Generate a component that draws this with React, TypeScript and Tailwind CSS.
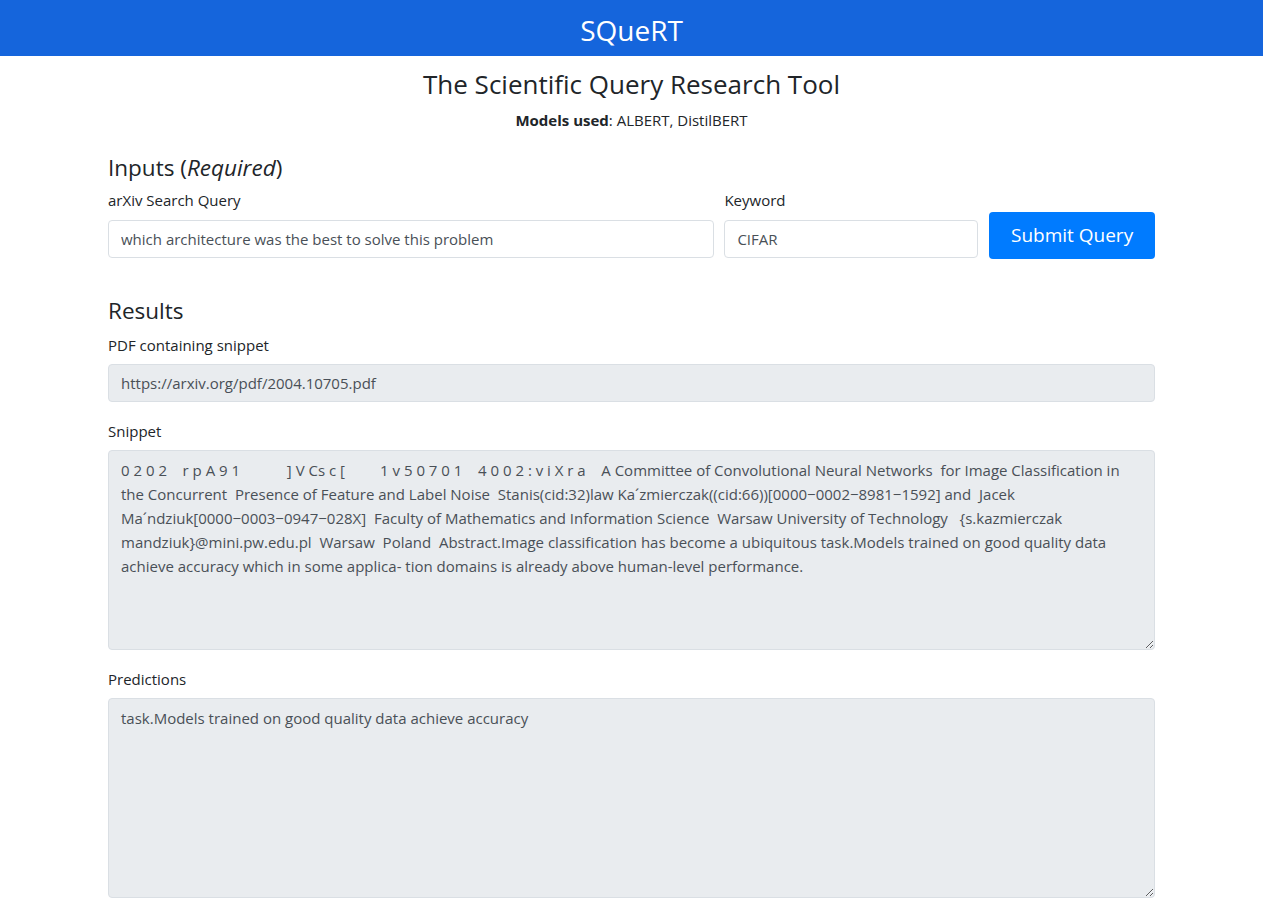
import React from 'react';

const snippet = [
  '0 2 0 2    r p A 9 1            ] V Cs c [         1 v 5 0 7 0 1    4 0 0 2 : v i X r a    A Committee of Convolutional Neural Networks  for Image Classification in',
  'the Concurrent  Presence of Feature and Label Noise  Stanis(cid:32)law Ka´zmierczak((cid:66))[0000−0002−8981−1592] and  Jacek',
  'Ma´ndziuk[0000−0003−0947−028X]  Faculty of Mathematics and Information Science  Warsaw University of Technology   {s.kazmierczak',
  'mandziuk}@mini.pw.edu.pl  Warsaw  Poland  Abstract.Image classification has become a ubiquitous task.Models trained on good quality data',
  'achieve accuracy which in some applica- tion domains is already above human-level performance.',
].join('\n');

const font = { fontFamily: '"Open Sans", "Noto Sans", sans-serif' };

function Field({ label, value, area }: { label: string; value: string; area?: boolean }) {
  return (
    <div className="mb-[17px]">
      <label className="block mb-[7px] text-[15px] leading-6 text-[#212529]">{label}</label>
      {area ? (
        <textarea
          readOnly
          value={value}
          className="block w-full h-[200px] rounded border border-[#dadfe4] bg-[#e9ecef] px-3 pt-[7px] pb-1.5 text-[15px] leading-6 text-[#495057] outline-none"
        />
      ) : (
        <input
          readOnly
          value={value}
          className="block w-full h-[38px] rounded border border-[#dadfe4] bg-[#e9ecef] px-3 text-[15px] text-[#495057] outline-none"
        />
      )}
    </div>
  );
}

export default function App() {
  return (
    <div className="w-[1263px] bg-white text-[#212529]" style={font}>
      <header className="h-14 bg-[#1565dc] flex items-center justify-center">
        <h1 className="text-[28px] text-white leading-none mt-[4px]">SQueRT</h1>
      </header>

      <div className="text-center mt-[11px]">
        <h2 className="text-[26px] leading-[34px]">The Scientific Query Research Tool</h2>
        <p className="mt-[7px] text-[15px] leading-6">
          <b>Models used</b>: ALBERT, DistilBERT
        </p>
      </div>

      <main className="mx-auto w-[1047px]">
        <h3 className="mt-[21px] text-[22.5px] leading-[29px]">
          Inputs (<i>Required</i>)
        </h3>
        <div className="mt-[6px] flex items-end gap-[10px]">
          <div className="w-[607px]">
            <label className="block mb-[8px] text-[15px] leading-6">arXiv Search Query</label>
            <input
              readOnly
              value="which architecture was the best to solve this problem"
              className="block w-full h-[38px] rounded border border-[#dadfe4] bg-white px-3 text-[15px] text-[#495057] outline-none"
            />
          </div>
          <div className="w-[254px]">
            <label className="block mb-[8px] text-[15px] leading-6">Keyword</label>
            <input
              readOnly
              value="CIFAR"
              className="block w-full h-[38px] rounded border border-[#dadfe4] bg-white px-3 text-[15px] text-[#495057] outline-none"
            />
          </div>
          <button className="ml-[1px] w-[166px] h-[47px] mb-[-1px] rounded bg-[#007bff] text-white text-[19px]">
            Submit Query
          </button>
        </div>

        <h3 className="mt-[38px] text-[22.5px] leading-[29px]">Results</h3>
        <div className="mt-[8px]">
          <Field label="PDF containing snippet" value="https://arxiv.org/pdf/2004.10705.pdf" />
          <Field label="Snippet" value={snippet} area />
          <Field label="Predictions" value="task.Models trained on good quality data achieve accuracy" area />
        </div>
      </main>
    </div>
  );
}
